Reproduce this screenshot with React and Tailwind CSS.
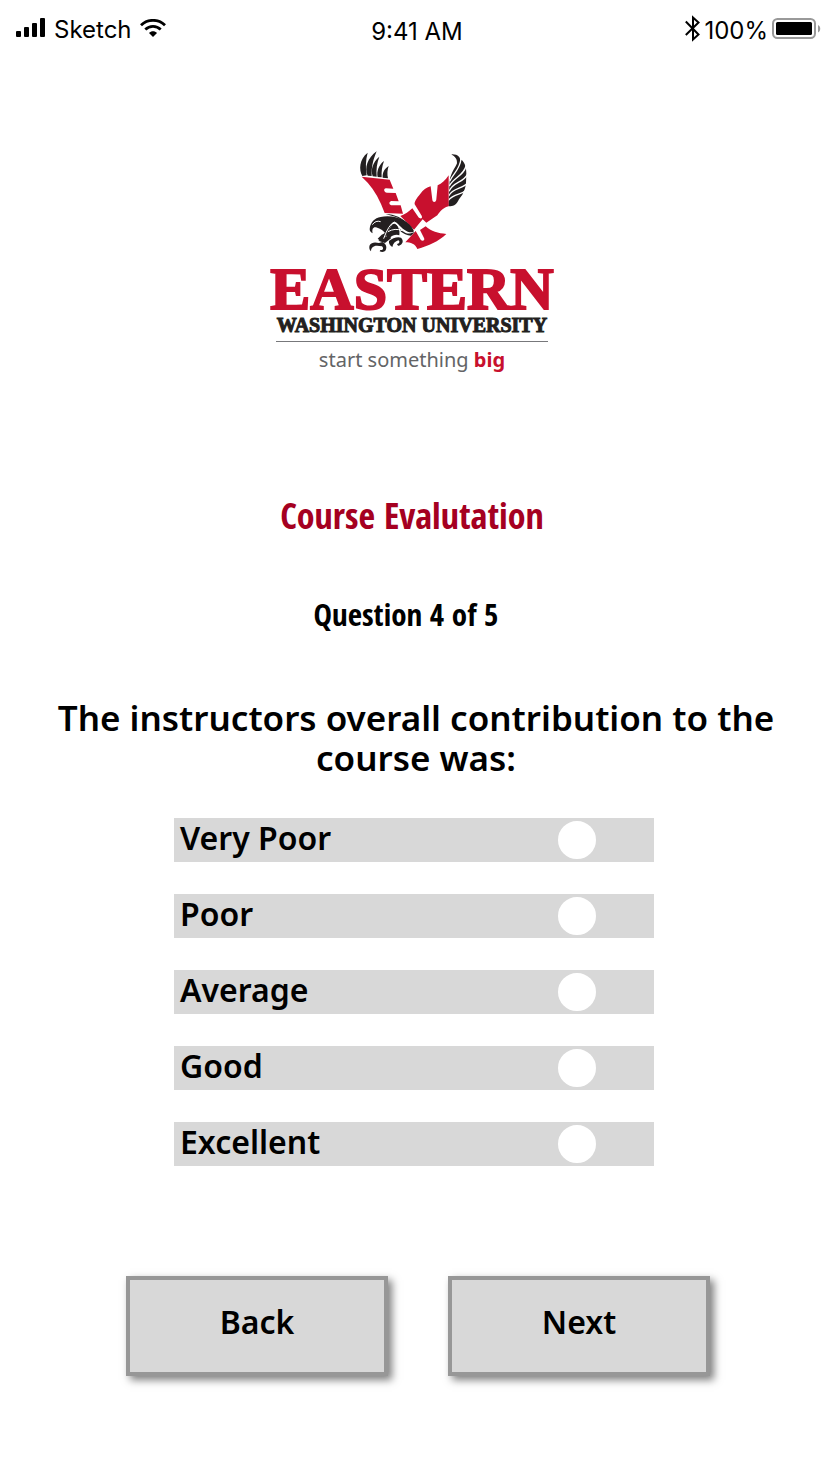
import { useState } from "react";

const options = ["Very Poor", "Poor", "Average", "Good", "Excellent"];

function SignalIcon() {
  return (
    <svg width="30" height="20" viewBox="0 0 30 20" className="mb-1" aria-hidden="true">
      <rect x="0" y="13" width="5" height="6" rx="1" />
      <rect x="8" y="9" width="5" height="10" rx="1" />
      <rect x="16" y="5" width="5" height="14" rx="1" />
      <rect x="24" y="0" width="5" height="19" rx="1" />
    </svg>
  );
}

function WifiIcon() {
  return (
    <svg width="26" height="18" viewBox="0 0 26 18" fill="none" stroke="#000" className="mb-1" aria-hidden="true">
      <path d="M1 6.2C7.7-.3 18.3-.3 25 6.2" strokeWidth="2.8" />
      <path d="M5.3 10.5c4.3-4.3 11.1-4.3 15.4 0" strokeWidth="2.7" />
      <path d="M13 18l-4-4c2.2-2.2 5.8-2.2 8 0z" fill="#000" stroke="none" />
    </svg>
  );
}

function BluetoothIcon() {
  return (
    <svg width="15" height="27" viewBox="0 0 15 27" fill="none" stroke="#000" strokeWidth="2" className="mb-1" aria-hidden="true">
      <path d="M.8 6.5L13.5 19.5 8 24.5V2.5l5.5 5L.8 20" />
    </svg>
  );
}

function BatteryIcon() {
  return (
    <svg width="50" height="22" viewBox="0 0 50 22" className="mb-1" aria-hidden="true">
      <rect x="1" y="1" width="42" height="19" rx="4.5" fill="none" stroke="#999" strokeWidth="2" />
      <rect x="4" y="4" width="36" height="13" rx="1.5" />
      <path d="M46 7c3 1.5 3 6 0 7.5z" fill="#999" />
    </svg>
  );
}

function EagleLogo() {
  return (
    <svg width="130" height="115" viewBox="0 0 390 345" role="img" aria-label="Eagle">
      <g fill="#231f20">
        <path d="M40 96C29 77 31 45 56 26C50 48 49 72 53 94Z" />
        <path d="M56 95C45 73 56 41 83 22C73 46 67 68 68 96Z" />
        <path d="M71 97C64 77 72 53 91 38C84 57 81 75 83 98Z" />
        <path d="M86 99C82 83 89 63 105 51C99 68 97 82 98 100Z" />
        <path d="M101 101C100 88 105 75 119 66C115 78 114 90 117 103Z" />
        <path d="M307 31C327 30 336 40 333 53L338 47C349 58 352 72 352 88L351 118C350 130 345 143 340 152L330 166C323 182 312 189 298 186L302 110C306 85 320 70 324 58C325 45 318 38 307 31Z" />
      </g>
      <g fill="none" stroke="#fff" strokeWidth="4">
        <path d="M336 45C332 78 314 86 302 112" />
        <path d="M352 63C344 98 314 99 301 126" />
        <path d="M355 92C342 117 312 113 300 142" />
        <path d="M356 117C340 136 312 130 299 156" />
        <path d="M353 138C336 153 314 148 298 169" />
      </g>
      <g fill="#c8102e">
        <path d="M38 98L122 107L133 134L111 133C102 134 105 146 114 146L140 147L149 172L127 171C118 173 120 184 130 184L155 184L162 209L107 207L96 180Q76 132 38 98Z" />
        <path d="M154 216C168 211 180 203 190 193L208 219C214 227 222 223 218 215L197 181C196 173 203 163 213 151C223 137 234 129 245 127L250 167C251 177 262 175 262 166L266 124C278 119 289 109 299 94V187C284 190 274 201 265 214L232 236L221 226L195 257C182 244 170 231 154 216Z" />
        <path d="M169 295C179 284 189 273 200 261L215 287C220 294 229 289 225 282L213 258L230 247C246 262 268 268 292 270C268 293 240 305 205 315C199 300 185 295 169 295Z" />
      </g>
      <g fill="#231f20">
        <path d="M62 255C64 235 77 222 95 219C132 211 181 226 195 262C190 267 176 265 166 257C158 252 154 247 147 240C140 231 132 232 126 242L111 272C105 261 95 254 81 250C73 248 68 255 71 268C65 265 62 261 62 255Z" />
        <path d="M110 210C137 210 160 223 178 240C165 235 154 222 130 216Z" />
        <path d="M128 243C119 259 113 270 108 282L95 291L86 284L98 272C107 272 115 256 120 250Z" />
        <path d="M129 242C137 235 146 240 152 260L151 274C142 270 130 274 122 282L110 274Z" />
        <path d="M143 244C151 253 157 261 170 267C180 271 188 267 197 264L186 275C174 275 163 269 153 261C147 255 145 250 143 244Z" />
        <path d="M62 304C67 294 79 294 90 297L100 294C111 299 115 309 110 319C106 325 98 325 92 322L94 318C102 320 105 313 99 307C91 306 82 304 76 307C69 309 66 315 66 322C60 317 60 310 62 304Z" />
        <path d="M120 291C130 281 148 277 156 281C164 288 162 298 154 303C150 307 146 306 144 300C151 299 154 293 148 289C139 292 132 298 130 309C122 304 119 298 120 291Z" />
        <path d="M88 290L121 272L126 283L108 297Z" />
      </g>
      <g fill="none" stroke="#fff" strokeWidth="3">
        <path d="M70 242Q80 228 95 233" />
        <path d="M104 284Q119 241 136 234Q152 242 156 278" />
        <path d="M117 263Q138 251 160 260" />
      </g>
    </svg>
  );
}

function StatusBar() {
  return (
    <header className="grid h-15 grid-cols-3 items-center pr-1.5 pl-4 font-['Inter',sans-serif] text-2xl">
      <div className="flex items-center gap-2">
        <SignalIcon />
        <span>Sketch</span>
        <WifiIcon />
      </div>
      <div className="pt-1 pr-1 text-center">9:41 AM</div>
      <div className="flex items-center justify-end gap-1 pt-px">
        <BluetoothIcon />
        <span>100%</span>
        <BatteryIcon />
      </div>
    </header>
  );
}

function Brand() {
  return (
    <div className="mt-21 flex flex-col items-center">
      <EagleLogo />
      <div className="mt-0.5 flex flex-col items-center pr-1">
        <div className="font-['Liberation_Serif',serif] text-[60px] leading-14 font-bold text-[#c8102e] [-webkit-text-stroke:2px_#c8102e]">
          EASTERN
        </div>
        <div className="font-['Liberation_Serif',serif] text-xl leading-4 font-bold whitespace-nowrap text-[#231f20] [-webkit-text-stroke:1px_#231f20]">
          WASHINGTON UNIVERSITY
        </div>
        <div className="mt-2 w-68 border-t border-[#77787b] pt-1.5 text-center text-xl leading-6 text-[#636466]">
          start something <b className="text-[#c8102e]">big</b>
        </div>
      </div>
    </div>
  );
}

export default function App() {
  const [answer, setAnswer] = useState("");
  const button =
    "h-25 w-[262px] border-4 border-[#979797] bg-[#d8d8d8] pb-2 text-[32px] font-semibold shadow-[4px_4px_8px_rgba(0,0,0,0.5)]";

  return (
    <div className="min-h-screen bg-white font-['Noto_Sans',sans-serif] text-black">
      <StatusBar />
      <main className="flex flex-col items-center pb-24">
        <Brand />
        <h1 className="mt-30 pr-1 font-['Open_Sans_Condensed','Roboto_Condensed',sans-serif] text-[36px] leading-12 font-bold text-[#a50021]">
          Course Evalutation
        </h1>
        <h2 className="mt-[50px] pr-4 font-['Open_Sans_Condensed','Roboto_Condensed',sans-serif] text-[31px] leading-12 font-bold">
          Question 4 of 5
        </h2>
        <form className="mt-15 flex w-full flex-col items-center" onSubmit={(e) => e.preventDefault()}>
          <fieldset className="flex w-full flex-col items-center">
            <legend className="mx-auto max-w-184 pl-1 text-center text-[35px] leading-10 font-semibold">
              The instructors overall contribution to the course was:
            </legend>
            <div className="mt-10 flex w-120 max-w-full flex-col gap-8">
              {options.map((option) => (
                <label
                  key={option}
                  className="flex h-11 items-center justify-between bg-[#d8d8d8] pr-[58px] pl-1.5 text-[32px] leading-10 font-semibold"
                >
                  <span className="pb-1">{option}</span>
                  <input
                    type="radio"
                    name="rating"
                    value={option}
                    checked={answer === option}
                    onChange={() => setAnswer(option)}
                    className="size-[38px] appearance-none rounded-full border-8 border-white bg-white checked:bg-[#a50021]"
                  />
                </label>
              ))}
            </div>
          </fieldset>
          <div className="mt-[110px] flex flex-wrap justify-center gap-15 pl-2">
            <button type="button" className={button}>Back</button>
            <button type="submit" className={button}>Next</button>
          </div>
        </form>
      </main>
    </div>
  );
}
